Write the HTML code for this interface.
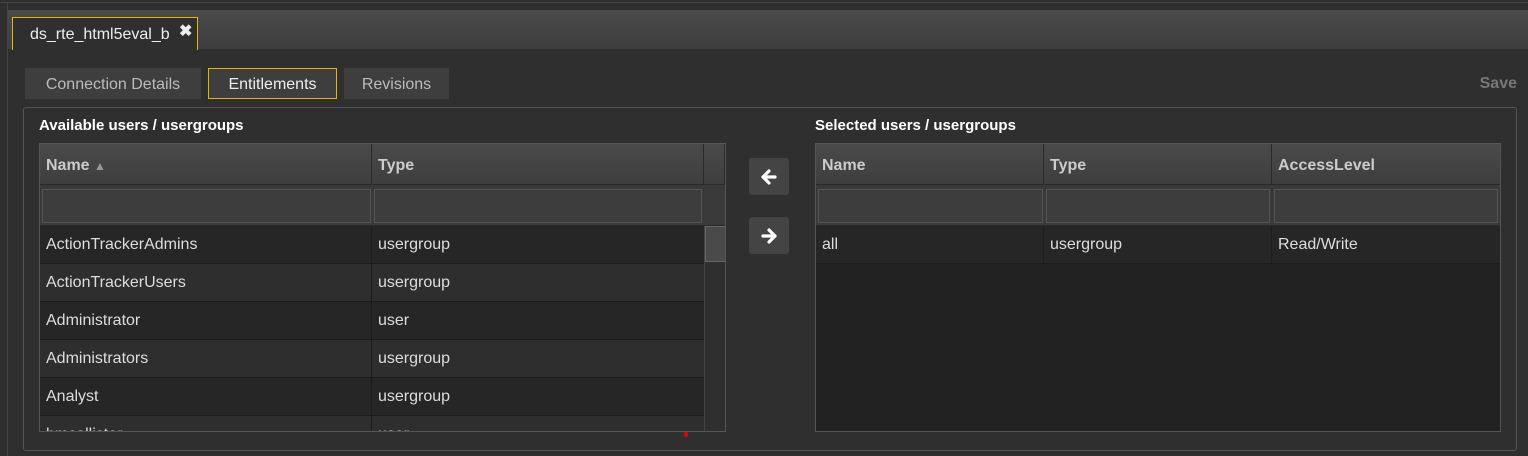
<!DOCTYPE html><html><head><style>
*{margin:0;padding:0;box-sizing:border-box}
body{width:1528px;height:456px;background:#2f2f2f;font-family:"Liberation Sans",sans-serif;position:relative;overflow:hidden;color:#ddd}
.a{position:absolute}
.hdr{background:linear-gradient(#4a4a4a,#3e3e3e);border-right:1px solid #2a2a2a;border-bottom:1px solid #2a2a2a;font-weight:bold;font-size:16px;color:#ccc;padding:13px 6px}
.flt{background:#3a3a3a;border-bottom:1px solid #2a2a2a}
.flt div{position:absolute;top:4px;height:34px;background:#3d3d3d;border:1px solid #555}
.row{position:absolute;height:38px;border-bottom:1px solid #1c1c1c;font-size:16px;color:#ddd}
.row span{position:absolute;top:10px}
.st{background:#3e3e3e;color:#bbb;font-size:16px;text-align:center;padding-top:8px}
.btn{background:#444;border-radius:3px;width:40px;height:37px}
.btn svg{position:absolute;left:12px;top:11px}
</style></head><body>
<div class="a" style="left:0;top:0;width:1528px;height:3px;border-bottom:1px solid #444"></div>
<div class="a" style="left:7px;top:3px;width:1521px;height:453px;border-left:1px solid #444"></div>
<div class="a" style="left:8px;top:10px;width:1520px;height:39px;background:linear-gradient(#4a4a4a,#3e3e3e)"></div>
<div class="a" style="left:12px;top:17px;width:186px;height:33px;border:1px solid #e8b400;border-bottom:none;background:#2f2f2f;font-size:16px;color:#eee;padding:8px 0 0 17px">ds_rte_html5eval_b <b style="position:absolute;left:166px;top:3px;font-size:16px">✖</b></div>
<div class="a st" style="left:25px;top:68px;width:176px;height:31px">Connection Details</div>
<div class="a st" style="left:208px;top:68px;width:129px;height:31px;border:1px solid #e8b400;color:#eee;padding-top:7px">Entitlements</div>
<div class="a st" style="left:344px;top:68px;width:105px;height:31px">Revisions</div>
<div class="a" style="right:11px;top:75px;font-weight:bold;font-size:16px;color:#777">Save</div>
<div class="a" style="left:23px;top:107px;width:1494px;height:344px;border:1px solid #555;border-radius:3px"></div>
<div class="a" style="left:39px;top:117px;font-weight:bold;font-size:15px;color:#fff">Available users / usergroups</div>
<div class="a" style="left:815px;top:117px;font-weight:bold;font-size:15px;color:#fff">Selected users / usergroups</div>
<div class="a" style="left:39px;top:143px;width:687px;height:289px;border:1px solid #555;background:#2a2a2a;overflow:hidden">
<div class="a hdr" style="left:0;top:0;width:332px;height:41px">Name <span style="font-size:12px;color:#999">▲</span></div>
<div class="a hdr" style="left:332px;top:0;width:332px;height:41px">Type</div>
<div class="a hdr" style="left:664px;top:0;width:21px;height:41px"></div>
<div class="a flt" style="left:0;top:41px;width:685px;height:41px"><div style="left:2px;width:329px"></div><div style="left:334px;width:328px"></div></div>
<div class="a" style="left:664px;top:82px;width:22px;height:210px;background:#2f2f2f;border-left:1px solid #444"><div class="a" style="left:0;top:0;width:21px;height:36px;background:#4a4a4a;border:1px solid #666"></div></div>
<div class="row" style="top:82px;width:664px;background:#262626"><span style="left:6px">ActionTrackerAdmins</span><span style="left:338px">usergroup</span></div>
<div class="row" style="top:120px;width:664px;background:#2e2e2e"><span style="left:6px">ActionTrackerUsers</span><span style="left:338px">usergroup</span></div>
<div class="row" style="top:158px;width:664px;background:#262626"><span style="left:6px">Administrator</span><span style="left:338px">user</span></div>
<div class="row" style="top:196px;width:664px;background:#2e2e2e"><span style="left:6px">Administrators</span><span style="left:338px">usergroup</span></div>
<div class="row" style="top:234px;width:664px;background:#262626"><span style="left:6px">Analyst</span><span style="left:338px">usergroup</span></div>
<div class="row" style="top:272px;width:664px;background:#2e2e2e"><span style="left:6px">bmcallister</span><span style="left:338px">user</span></div>
<div class="a" style="left:331px;top:82px;width:1px;height:210px;background:#1c1c1c"></div>
</div>
<div class="a btn" style="left:749px;top:158px"><svg width="16" height="16" viewBox="0 0 16 16"><path d="M8 2 L2 8 L8 14 M2 8 H14" stroke="#fff" stroke-width="3.2" fill="none" stroke-linejoin="round" stroke-linecap="round"/></svg></div>
<div class="a btn" style="left:749px;top:217px"><svg width="16" height="16" viewBox="0 0 16 16"><path d="M8 2 L14 8 L8 14 M14 8 H2" stroke="#fff" stroke-width="3.2" fill="none" stroke-linejoin="round" stroke-linecap="round"/></svg></div>
<div class="a" style="left:684px;top:432px;width:4px;height:5px;background:#e00;border-radius:2px"></div>
<div class="a" style="left:815px;top:143px;width:686px;height:289px;border:1px solid #555;background:#222;overflow:hidden">
<div class="a hdr" style="left:0;top:0;width:228px;height:41px">Name</div>
<div class="a hdr" style="left:228px;top:0;width:228px;height:41px">Type</div>
<div class="a hdr" style="left:456px;top:0;width:229px;height:41px">AccessLevel</div>
<div class="a flt" style="left:0;top:41px;width:685px;height:41px"><div style="left:2px;width:225px"></div><div style="left:230px;width:224px"></div><div style="left:458px;width:224px"></div></div>
<div class="row" style="top:82px;width:685px;background:#262626"><span style="left:6px">all</span><span style="left:234px">usergroup</span><span style="left:462px">Read/Write</span></div>
<div class="a" style="left:227px;top:82px;width:1px;height:38px;background:#1c1c1c"></div>
<div class="a" style="left:455px;top:82px;width:1px;height:38px;background:#1c1c1c"></div>
</div>
</body></html>
